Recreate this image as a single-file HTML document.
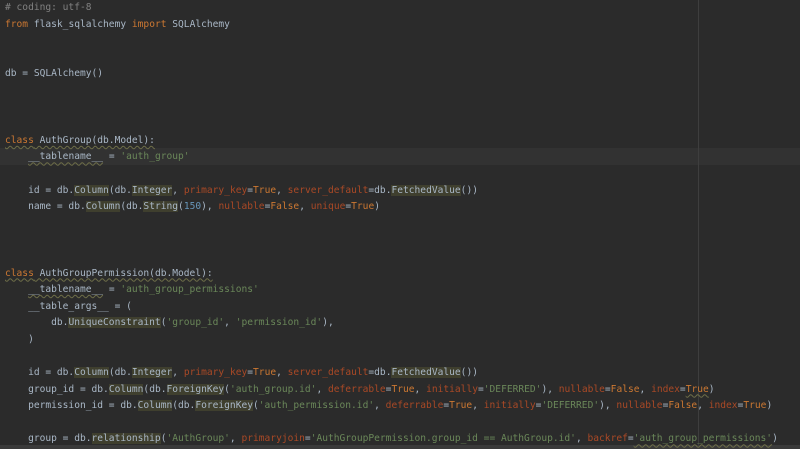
<!DOCTYPE html>
<html><head><style>
html,body{margin:0;padding:0;background:#2b2b2b;width:800px;height:449px;overflow:hidden}
.v{position:absolute;left:698px;top:0;width:1px;height:449px;background:#3e3e3e}
.cl{position:absolute;left:0;top:148px;width:800px;height:16.6px;background:#323232}
.bot{position:absolute;left:0;top:445px;width:800px;height:4px;background:#3a3a3a}
pre{position:absolute;left:5px;top:0px;margin:0;font-family:"DejaVu Sans Mono",monospace;font-size:9.58px;line-height:16.6px;color:#a9b7c6}
.k{color:#cc7832}.s{color:#6a8759}.c{color:#808080}.p{color:#aa4926}.n{color:#6897bb}
.h{background:#3f3f2e}
.w{text-decoration:underline wavy #6e6e48;text-decoration-thickness:1px;text-underline-offset:2px}
</style></head><body>
<div class="cl"></div><div class="v"></div><div class="bot"></div>
<pre><span class="c"># coding: utf-8</span>
<span class="k">from</span> flask_sqlalchemy <span class="k">import</span> SQLAlchemy


db = SQLAlchemy()



<span class="w"><span class="k">class</span> AuthGroup(db.Model):</span>
    <span class="w">__tablename__</span> = <span class="s">'auth_group'</span>

    id = db.<span class="h">Column</span>(db.<span class="h">Integer</span>, <span class="p">primary_key</span>=<span class="k">True</span>, <span class="p">server_default</span>=db.<span class="h">FetchedValue</span>())
    name = db.<span class="h">Column</span>(db.<span class="h">String</span>(<span class="n">150</span>), <span class="p">nullable</span>=<span class="k">False</span>, <span class="p">unique</span>=<span class="k">True</span>)



<span class="w"><span class="k">class</span> AuthGroupPermission(db.Model):</span>
    <span class="w">__tablename__</span> = <span class="s">'auth_group_permissions'</span>
    __table_args__ = (
        db.<span class="h">UniqueConstraint</span>(<span class="s">'group_id'</span>, <span class="s">'permission_id'</span>),
    )

    id = db.<span class="h">Column</span>(db.<span class="h">Integer</span>, <span class="p">primary_key</span>=<span class="k">True</span>, <span class="p">server_default</span>=db.<span class="h">FetchedValue</span>())
    group_id = db.<span class="h">Column</span>(db.<span class="h">ForeignKey</span>(<span class="s">'auth_group.id'</span>, <span class="p">deferrable</span>=<span class="k">True</span>, <span class="p">initially</span>=<span class="s">'DEFERRED'</span>), <span class="p">nullable</span>=<span class="k">False</span>, <span class="p">index</span>=<span class="k w">True</span>)
    permission_id = db.<span class="h">Column</span>(db.<span class="h">ForeignKey</span>(<span class="s">'auth_permission.id'</span>, <span class="p">deferrable</span>=<span class="k">True</span>, <span class="p">initially</span>=<span class="s">'DEFERRED'</span>), <span class="p">nullable</span>=<span class="k">False</span>, <span class="p">index</span>=<span class="k">True</span>)

    group = db.<span class="h">relationship</span>(<span class="s">'AuthGroup'</span>, <span class="p">primaryjoin</span>=<span class="s">'AuthGroupPermission.group_id == AuthGroup.id'</span>, <span class="p">backref</span>=<span class="s w">'auth_group_permissions'</span>)
</pre>
</body></html>
